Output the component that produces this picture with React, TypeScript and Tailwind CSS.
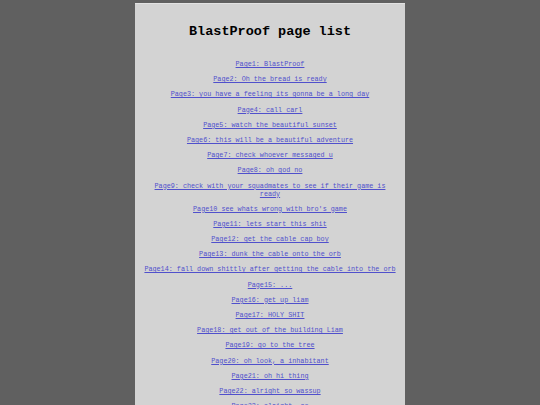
const PAGES = [
  "Page1: BlastProof",
  "Page2: Oh the bread is ready",
  "Page3: you have a feeling its gonna be a long day",
  "Page4: call carl",
  "Page5: watch the beautiful sunset",
  "Page6: this will be a beautiful adventure",
  "Page7: check whoever messaged u",
  "Page8: oh god no",
  "Page9: check with your squadmates to see if their game is ready",
  "Page10 see whats wrong with bro's game",
  "Page11: lets start this shit",
  "Page12: get the cable cap boy",
  "Page13: dunk the cable onto the orb",
  "Page14: fall down shittly after getting the cable into the orb",
  "Page15: ...",
  "Page16: get up liam",
  "Page17: HOLY SHIT",
  "Page18: get out of the building Liam",
  "Page19: go to the tree",
  "Page20: oh look, a inhabitant",
  "Page21: oh hi thing",
  "Page22: alright so wassup",
  "Page23: alright, so",
];

export default function App() {
  return (
    <div className="min-h-screen bg-[#606060] pt-[3px]" style={{ fontFamily: '"Liberation Mono", "Courier New", monospace' }}>
      <div className="mx-auto w-[270px] bg-[#d3d3d3] border-t border-[#e2e2e2] px-[8px] pt-[20px] pb-[20px]">
        <h1 className="text-center text-[13.5px] font-bold leading-[15px] text-black">BlastProof page list</h1>
        <div className="mt-[21px] flex flex-col gap-[7.2px]">
          {PAGES.map((p) => (
            <p key={p} className="text-center text-[6.75px] leading-[8px]">
              <a href="#" className="text-[#5050cc] underline">
                {p}
              </a>
            </p>
          ))}
        </div>
      </div>
    </div>
  );
}
